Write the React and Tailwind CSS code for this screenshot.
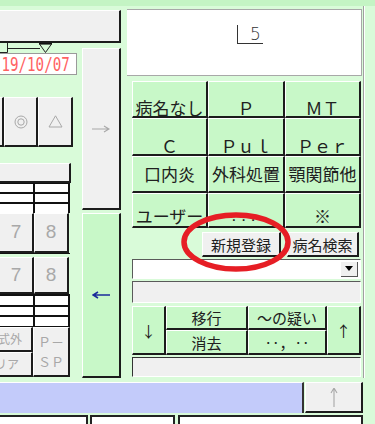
const raised =
  "border-t border-l border-t-white border-l-white border-r-2 border-b-2 border-r-[#1c1c1c] border-b-[#1c1c1c]";
const raisedNoLeft =
  "border-t border-t-white border-r-2 border-b-2 border-r-[#1c1c1c] border-b-[#1c1c1c]";
const sunken =
  "border-t border-l border-t-[#5a5a5a] border-l-[#5a5a5a] border-r border-b border-r-white border-b-white";

function Cell({ children, className = "" }) {
  return (
    <div className={`flex justify-center bg-[#c8f8c8] ${raised} ${className}`}>{children}</div>
  );
}

function MiniTable({ className = "" }) {
  return (
    <div className={`grid grid-cols-[33px_33px] gap-[2px] bg-[#111] pr-[2px] w-[70px] ${className}`}>
      {Array.from({ length: 6 }).map((_, i) => (
        <div key={i} className="bg-white" />
      ))}
    </div>
  );
}

function Arrow({ dir, color }) {
  if (dir === "right")
    return (
      <svg width="18" height="8" viewBox="0 0 18 8">
        <path d="M0 4H17M12 1L17 4L12 7" stroke={color} strokeWidth="1.2" fill="none" />
      </svg>
    );
  if (dir === "left")
    return (
      <svg width="18" height="8" viewBox="0 0 18 8">
        <path d="M1 4H18M6 1L1 4L6 7" stroke={color} strokeWidth="1.6" fill="none" />
      </svg>
    );
  return (
    <svg width="8" height="19" viewBox="0 0 8 19">
      <path d="M4 0V19M1 5L4 0L7 5" stroke={color} strokeWidth="1.1" fill="none" />
    </svg>
  );
}

export default function App() {
  return (
    <div className="relative w-[375px] h-[424px] overflow-hidden bg-[#d9fbd9] font-['Noto_Sans_CJK_JP',sans-serif] text-[#202020]">
      <div className="h-[6px] bg-[#c4f4c4]" />
      <div className="flex h-[372px]">
        {/* left block */}
        <div className="w-[121px] flex flex-col">
          <div className={`mt-[4px] h-[33px] w-[121px] bg-[#f0f0f0] ${raisedNoLeft}`} />
          <div className="flex">
            <div className="w-[77px] flex flex-col">
              <svg width="60" height="10" viewBox="0 0 60 10" className="block">
                <path d="M0 9.5H7.5V0" stroke="#222" strokeWidth="1" fill="none" />
                <path d="M7.5 5.5H40" stroke="#222" strokeWidth="1" />
                <path d="M39 0.8H52" stroke="#111" strokeWidth="1.6" />
                <path d="M39.5 1L45.5 9.5L51.5 1" stroke="#222" strokeWidth="1" fill="none" />
              </svg>
              <div className="h-[22px] w-[77px] bg-white border-t border-r border-b border-[#9a9a9a] overflow-hidden flex items-center">
                <span className="font-['DejaVu_Sans_Mono',monospace] text-[20px] leading-none text-[#ff6262] inline-block scale-x-[0.71] origin-left whitespace-nowrap pl-[2px]">
                  19/10/07
                </span>
              </div>
              <div className="h-[22px]" />
              <div className="flex h-[50px] text-[#a8a8a8]">
                <div className={`w-[4px] bg-[#f0f0f0] ${raisedNoLeft}`} />
                <div className={`w-[34px] bg-[#f0f0f0] ${raised} flex items-center justify-center`}>
                  <svg width="14" height="14" viewBox="0 0 14 14">
                    <circle cx="7" cy="7" r="6" stroke="#a8a8a8" fill="none" strokeWidth="1" />
                    <circle cx="7" cy="7" r="3.2" stroke="#a8a8a8" fill="none" strokeWidth="1" />
                  </svg>
                </div>
                <div className={`w-[35px] bg-[#f0f0f0] ${raised} flex items-center justify-center`}>
                  <svg width="15" height="13" viewBox="0 0 15 13">
                    <path d="M7.5 0.8L14 12H1Z" stroke="#a8a8a8" fill="none" strokeWidth="1" />
                  </svg>
                </div>
              </div>
              <div className="h-[16px]" />
              <div className={`h-[20px] w-[71px] bg-[#f0f0f0] ${raisedNoLeft}`} />
              <MiniTable className="h-[30px] grid-rows-[8px_8px_9px] pt-[1px]" />
              <div className="flex h-[40px] text-[#a8a8a8] text-[19px] font-['Liberation_Sans',sans-serif]">
                <div className={`w-[34px] bg-[#f0f0f0] ${raisedNoLeft} flex items-center justify-center`}>7</div>
                <div className={`w-[35px] bg-[#f0f0f0] ${raised} flex items-center justify-center`}>8</div>
              </div>
              <div className="h-[1px] w-[70px] bg-[#111]" />
              <div className="h-[3px]" />
              <div className="flex h-[37px] text-[#a8a8a8] text-[19px] font-['Liberation_Sans',sans-serif]">
                <div className={`w-[34px] bg-[#f0f0f0] ${raisedNoLeft} flex items-center justify-center`}>7</div>
                <div className={`w-[35px] bg-[#f0f0f0] ${raised} flex items-center justify-center`}>8</div>
              </div>
              <MiniTable className="h-[33px] grid-rows-[9px_8px_9px] pt-[2px] pb-[1px]" />
              <div className="flex h-[50px] text-[#a8a8a8]">
                <div className="w-[33px] flex flex-col">
                  <div className={`h-[25px] bg-[#f0f0f0] ${raisedNoLeft} overflow-hidden flex items-center justify-end pr-[9px] text-[12px] leading-none whitespace-nowrap`}>
                    様式外
                  </div>
                  <div className={`h-[25px] bg-[#f0f0f0] ${raisedNoLeft} overflow-hidden flex items-center justify-end pr-[12px] text-[12px] leading-none whitespace-nowrap`}>
                    クリア
                  </div>
                </div>
                <div className={`w-[37px] bg-[#f0f0f0] ${raised} flex flex-col items-center justify-center text-[13px] leading-[20px]`}>
                  <span>Ｐ－</span>
                  <span>ＳＰ</span>
                </div>
              </div>
            </div>
            <div className="ml-[5px] w-[39px] flex flex-col pt-[5px]">
              <div className={`h-[162px] bg-[#f0f0f0] ${raised} flex items-center justify-center`}>
                <Arrow dir="right" color="#a8a8a8" />
              </div>
              <div className={`mt-[3px] h-[165px] bg-[#c8f8c8] ${raised} flex items-center justify-center`}>
                <Arrow dir="left" color="#1a2a9a" />
              </div>
            </div>
          </div>
        </div>
        <div className="w-[6px]" />
        {/* right panel */}
        <div className="w-[236px] flex flex-col">
          <div className="mt-[3px] h-[67px] w-[235px] bg-white border-t border-r border-b border-[#a8a8a8] flex justify-center pt-[15px]">
            <div className="ml-[12px] h-[19px] border-l border-b border-[#333] pl-[12px] pr-[2px] text-[17px] leading-[18px] text-[#333] font-['DejaVu_Sans',sans-serif] font-light">
              5
            </div>
          </div>
          <div className="mt-[5px] ml-[5px] grid grid-cols-[76px_77px_76px] grid-rows-[37px_38px_37px_35px] text-[17px] leading-none">
            <Cell className="items-end pb-0">病名なし</Cell>
            <Cell className="items-end pb-0">Ｐ</Cell>
            <Cell className="items-end pb-0">ＭＴ</Cell>
            <Cell className="items-end pb-0">Ｃ</Cell>
            <Cell className="items-end pb-0">Ｐｕｌ</Cell>
            <Cell className="items-end pb-0">Ｐｅｒ</Cell>
            <Cell className="items-end pb-[9px]">口内炎</Cell>
            <Cell className="items-end pb-[9px]">外科処置</Cell>
            <Cell className="items-end pb-[9px]">顎関節他</Cell>
            <Cell className="items-end pb-[2px]">ユーザー</Cell>
            <Cell className="items-end pb-[2px]">
              <span className="font-['Liberation_Sans',sans-serif] tracking-[5px]">...</span>
            </Cell>
            <Cell className="items-end pb-[2px]">※</Cell>
          </div>
          <div className="mt-[4px] h-[25px] flex text-[15px] leading-none">
            <div className={`ml-[75px] w-[79px] bg-[#f0f0f0] ${raised} flex items-center justify-center`}>新規登録</div>
            <div className={`ml-[6px] w-[72px] bg-[#f0f0f0] ${raised} flex items-center justify-center`}>病名検索</div>
          </div>
          <div className={`mt-[2px] ml-[5px] h-[20px] w-[229px] bg-white ${sunken} flex justify-end items-center pr-[2px]`}>
            <div className="w-[17px] h-[15px] bg-[#f0f0f0] border-r border-b border-[#555] flex items-center justify-center">
              <svg width="8" height="5" viewBox="0 0 8 5">
                <path d="M0 0H8L4 5Z" fill="#000" />
              </svg>
            </div>
          </div>
          <div className={`mt-[2px] ml-[5px] h-[22px] w-[229px] bg-[#f0f0f0] ${sunken}`} />
          <div className="mt-[3px] ml-[5px] h-[49px] w-[229px] flex text-[15px] leading-none">
            <Cell className="w-[34px] items-center">↓</Cell>
            <div className="w-[82px] flex flex-col">
              <Cell className="h-[24px] items-center">移行</Cell>
              <Cell className="h-[25px] items-center">消去</Cell>
            </div>
            <div className="w-[79px] flex flex-col">
              <Cell className="h-[24px] items-center">〜の疑い</Cell>
              <Cell className="h-[25px] items-center">‥，‥</Cell>
            </div>
            <Cell className="w-[34px] items-center">↑</Cell>
          </div>
          <div className={`mt-[2px] ml-[5px] h-[20px] w-[229px] bg-[#f0f0f0] ${sunken} border-t-[#333] border-l-[#333]`} />
        </div>
        <div className="w-[1px] bg-[#a0a0a0]" />
        <div className="w-[1px] bg-white" />
      </div>
      <div className="mt-[4px] flex h-[31px]">
        <div className="w-[304px] bg-[#c3cbfa] border-t border-t-white border-r-2 border-r-[#333]" />
        <div className={`ml-[1px] w-[58px] bg-[#f0f0f0] ${raised} flex items-center justify-center`}>
          <Arrow dir="up" color="#a8a8a8" />
        </div>
      </div>
      <div className="mt-[2px] flex h-[20px]">
        <div className="w-[88px] bg-white border-t-2 border-r-2 border-[#222]" />
        <div className="ml-[2px] w-[85px] bg-white border-t-2 border-l-2 border-r-2 border-[#222]" />
        <div className="ml-[3px] w-[185px] bg-white border-t-2 border-l-2 border-r-2 border-[#222]" />
      </div>
      <svg
        className="absolute left-[178px] top-[210px] pointer-events-none"
        width="116"
        height="64"
        viewBox="0 0 116 64"
      >
        <ellipse cx="58" cy="32" rx="52" ry="27" stroke="#e61e25" strokeWidth="5.5" fill="none" />
      </svg>
    </div>
  );
}
